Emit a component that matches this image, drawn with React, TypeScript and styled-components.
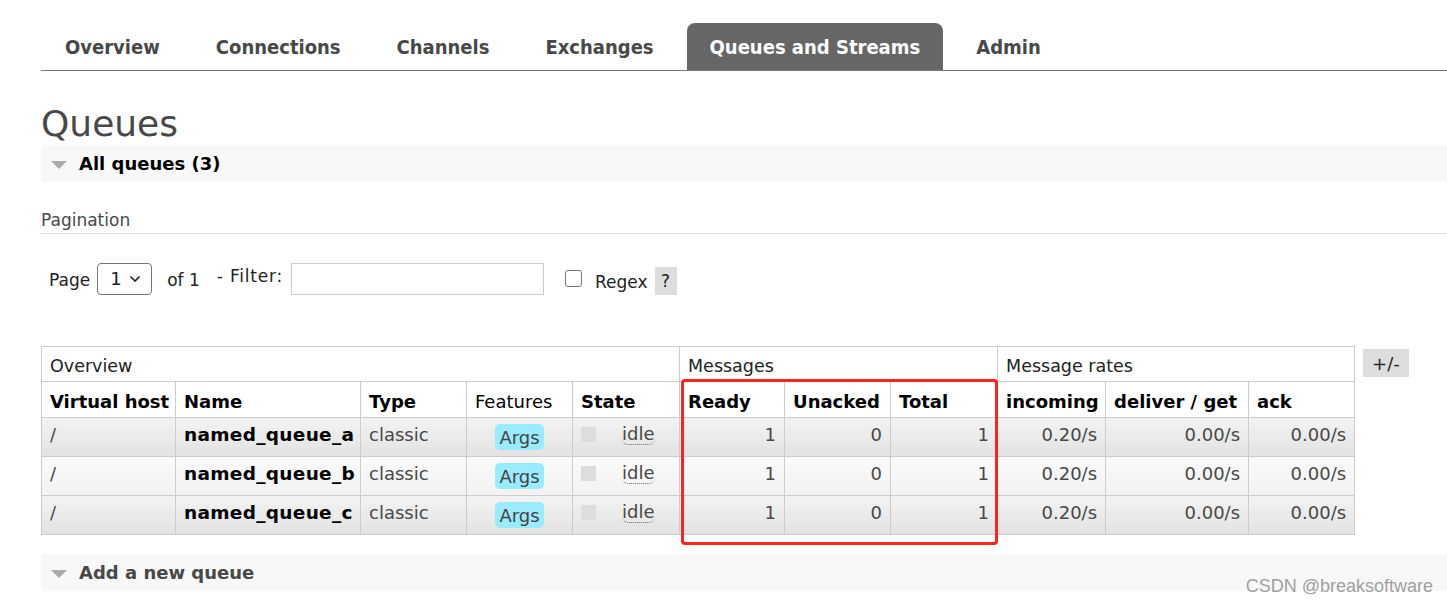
import styled, { createGlobalStyle } from "styled-components";

const GlobalStyle = createGlobalStyle`
  html, body {
    margin: 0;
    padding: 0;
    background: #fff;
    overflow: hidden;
  }
  body {
    font-family: "DejaVu Sans", Verdana, sans-serif;
    color: #484848;
  }
`;

const tabs = [
  "Overview",
  "Connections",
  "Channels",
  "Exchanges",
  "Queues and Streams",
  "Admin",
];

const queues = [
  { name: "named_queue_a", ready: 1, unacked: 0, total: 1 },
  { name: "named_queue_b", ready: 1, unacked: 0, total: 1 },
  { name: "named_queue_c", ready: 1, unacked: 0, total: 1 },
];

export default function App() {
  return (
    <Page>
      <GlobalStyle />
      <Nav>
        {tabs.map((t) => (
          <Tab key={t} $active={t === "Queues and Streams"}>
            {t}
          </Tab>
        ))}
      </Nav>

      <Title>Queues</Title>
      <SectionBar>
        <Triangle />
        <SectionTitle>All queues (3)</SectionTitle>
      </SectionBar>

      <SubHeading>Pagination</SubHeading>
      <FilterRow>
        <Label>Page</Label>
        <Select>
          <span>1</span>
          <svg width="12" height="8" viewBox="0 0 12 8">
            <path d="M1.5 1.5 L6 6 L10.5 1.5" fill="none" stroke="#222" strokeWidth="1.6" />
          </svg>
        </Select>
        <Label>of 1</Label>
        <FilterLabel>- Filter:</FilterLabel>
        <TextInput />
        <CheckBox />
        <Label $down>Regex</Label>
        <HelpButton>?</HelpButton>
      </FilterRow>

      <TableArea>
        <TableWrap>
          <Table>
            <colgroup>
              <col style={{ width: 134 }} />
              <col style={{ width: 185 }} />
              <col style={{ width: 106 }} />
              <col style={{ width: 106 }} />
              <col style={{ width: 107 }} />
              <col style={{ width: 105 }} />
              <col style={{ width: 106 }} />
              <col style={{ width: 107 }} />
              <col style={{ width: 108 }} />
              <col style={{ width: 143 }} />
              <col style={{ width: 106 }} />
            </colgroup>
            <thead>
              <GroupRow>
                <GroupCell colSpan={5}>Overview</GroupCell>
                <GroupCell colSpan={3}>Messages</GroupCell>
                <GroupCell colSpan={3}>Message rates</GroupCell>
              </GroupRow>
              <HeadRow>
                <HeadCell>Virtual host</HeadCell>
                <HeadCell>Name</HeadCell>
                <HeadCell>Type</HeadCell>
                <HeadCell $plain>Features</HeadCell>
                <HeadCell>State</HeadCell>
                <HeadCell>Ready</HeadCell>
                <HeadCell>Unacked</HeadCell>
                <HeadCell>Total</HeadCell>
                <HeadCell>incoming</HeadCell>
                <HeadCell>deliver / get</HeadCell>
                <HeadCell>ack</HeadCell>
              </HeadRow>
            </thead>
            <tbody>
              {queues.map((q, i) => (
                <DataRow key={q.name} $alt={i % 2 === 1}>
                  <Cell>/</Cell>
                  <NameCell>{q.name}</NameCell>
                  <Cell>classic</Cell>
                  <Cell $center>
                    <Badge>Args</Badge>
                  </Cell>
                  <Cell>
                    <StateBox>
                      <StateSquare />
                      <Idle>idle</Idle>
                    </StateBox>
                  </Cell>
                  <Cell $right>{q.ready}</Cell>
                  <Cell $right>{q.unacked}</Cell>
                  <Cell $right>{q.total}</Cell>
                  <Cell $right>0.20/s</Cell>
                  <Cell $right>0.00/s</Cell>
                  <Cell $right>0.00/s</Cell>
                </DataRow>
              ))}
            </tbody>
          </Table>
          <Highlight />
        </TableWrap>
        <ToggleButton>+/-</ToggleButton>
      </TableArea>

      <SectionBar $bottom>
        <Triangle />
        <SectionTitle $muted>Add a new queue</SectionTitle>
      </SectionBar>

      <Watermark>CSDN @breaksoftware</Watermark>
    </Page>
  );
}

const Page = styled.div`
  position: relative;
  height: 601px;
  padding-left: 41px;
  box-sizing: border-box;
`;

const Nav = styled.div`
  display: flex;
  align-items: flex-end;
  gap: 10px;
  padding-top: 23px;
  padding-left: 1px;
  border-bottom: 1px solid #777;
  height: 47px;
`;

const Tab = styled.div<{ $active?: boolean }>`
  height: 47px;
  display: flex;
  align-items: center;
  padding: 0 23px;
  border-radius: 8px 8px 0 0;
  font-family: "DejaVu Sans Condensed", "DejaVu Sans", sans-serif;
  font-stretch: condensed;
  font-weight: bold;
  font-size: 20px;
  color: ${(p) => (p.$active ? "#fff" : "#484848")};
  background: ${(p) => (p.$active ? "#666" : "transparent")};
`;

const Title = styled.h1`
  margin: 30px 0 0;
  height: 44px;
  font-size: 36px;
  font-weight: normal;
  line-height: 46px;
  color: #484848;
`;

const SectionBar = styled.div<{ $bottom?: boolean }>`
  display: flex;
  align-items: center;
  height: 37px;
  background: #f8f8f8;
  padding-left: 10px;
  margin-top: ${(p) => (p.$bottom ? "19px" : "0")};
`;

const Triangle = styled.span`
  width: 0;
  height: 0;
  border-left: 8px solid transparent;
  border-right: 8px solid transparent;
  border-top: 8px solid #aaa;
  margin-right: 12px;
  margin-top: 2px;
`;

const SectionTitle = styled.span<{ $muted?: boolean }>`
  font-weight: bold;
  font-size: 18px;
  color: ${(p) => (p.$muted ? "#484848" : "#000")};
`;

const SubHeading = styled.div`
  margin-top: 28px;
  font-size: 17px;
  line-height: 20px;
  padding-bottom: 3px;
  border-bottom: 1px solid #e2e2e2;
  color: #484848;
`;

const FilterRow = styled.div`
  display: flex;
  align-items: center;
  margin-top: 28px;
  padding-left: 8px;
  height: 33px;
`;

const Label = styled.span<{ $down?: boolean }>`
  font-size: 17px;
  color: #222;
  margin-top: ${(p) => (p.$down ? "6px" : "2px")};
`;

const Select = styled.div`
  width: 55px;
  height: 32px;
  box-sizing: border-box;
  border: 1px solid #767676;
  border-radius: 4px;
  display: flex;
  align-items: center;
  justify-content: space-between;
  padding: 0 10px 0 12px;
  margin: 0 15px 0 7px;
  font-size: 18px;
  color: #222;
`;

const FilterLabel = styled.span`
  font-size: 17px;
  letter-spacing: 0.8px;
  color: #222;
  margin: 0 8px 6px 17px;
`;

const TextInput = styled.input`
  width: 253px;
  height: 32px;
  box-sizing: border-box;
  border: 1px solid #ccc;
  margin: 0;
  padding: 0;
`;

const CheckBox = styled.span`
  width: 15px;
  height: 15px;
  border: 1px solid #767676;
  border-radius: 3px;
  margin: 0 13px 0 21px;
`;

const HelpButton = styled.span`
  width: 22px;
  height: 28px;
  background: #ddd;
  color: #222;
  font-size: 17px;
  display: flex;
  align-items: center;
  justify-content: center;
  margin-left: 7px;
  margin-top: 5px;
`;

const TableArea = styled.div`
  display: flex;
  align-items: flex-start;
  gap: 8px;
  margin-top: 51px;
`;

const TableWrap = styled.div`
  position: relative;
`;

const Table = styled.table`
  border-collapse: collapse;
  table-layout: fixed;
  width: 1313px;
  font-size: 18px;
`;

const GroupRow = styled.tr`
  height: 35px;
`;

const GroupCell = styled.th`
  border: 1px solid #ccc;
  text-align: left;
  font-weight: normal;
  font-size: 17.5px;
  padding: 3px 8px 0;
  color: #222;
`;

const HeadRow = styled.tr`
  height: 36px;
`;

const HeadCell = styled.th<{ $plain?: boolean }>`
  border: 1px solid #ccc;
  border-top: none;
  text-align: left;
  font-weight: ${(p) => (p.$plain ? "normal" : "bold")};
  font-size: 18px;
  padding: 4px 8px 0;
  color: #000;
  white-space: nowrap;
`;

const DataRow = styled.tr<{ $alt?: boolean }>`
  height: 39px;
  background: ${(p) =>
    p.$alt
      ? "linear-gradient(#fafafa, #f2f2f2)"
      : "linear-gradient(#f3f3f3, #e2e2e2)"};
`;

const Cell = styled.td<{ $right?: boolean; $center?: boolean }>`
  border: 1px solid #ccc;
  padding: 0 8px 6px;
  text-align: ${(p) => (p.$right ? "right" : p.$center ? "center" : "left")};
  color: #484848;
  white-space: nowrap;
`;

const NameCell = styled(Cell)`
  font-weight: bold;
  font-size: 18.5px;
  letter-spacing: 0.3px;
  color: #000;
`;

const Badge = styled.span`
  display: inline-block;
  background: #99ebff;
  border-radius: 5px;
  padding: 3px 4px 2px;
  color: #444;
  position: relative;
  top: 3px;
`;

const StateBox = styled.div`
  display: flex;
  align-items: center;
  gap: 26px;
`;

const StateSquare = styled.span`
  width: 15px;
  height: 15px;
  background: #ddd;
`;

const Idle = styled.span`
  border-bottom: 1px dotted #666;
  border-radius: 0 0 6px 6px;
  line-height: 20px;
`;

const Highlight = styled.div`
  position: absolute;
  left: 640px;
  top: 33px;
  width: 317px;
  height: 166px;
  box-sizing: border-box;
  border: 3px solid #ff2222;
  border-radius: 4px;
  pointer-events: none;
`;

const ToggleButton = styled.span`
  background: #ddd;
  color: #222;
  font-size: 18px;
  padding: 4px 9px 3px;
  margin-top: 3px;
`;

const Watermark = styled.div`
  position: absolute;
  right: 14px;
  bottom: 4px;
  font-family: "Liberation Sans", Arial, sans-serif;
  font-size: 18px;
  color: #a0a0a0;
`;
